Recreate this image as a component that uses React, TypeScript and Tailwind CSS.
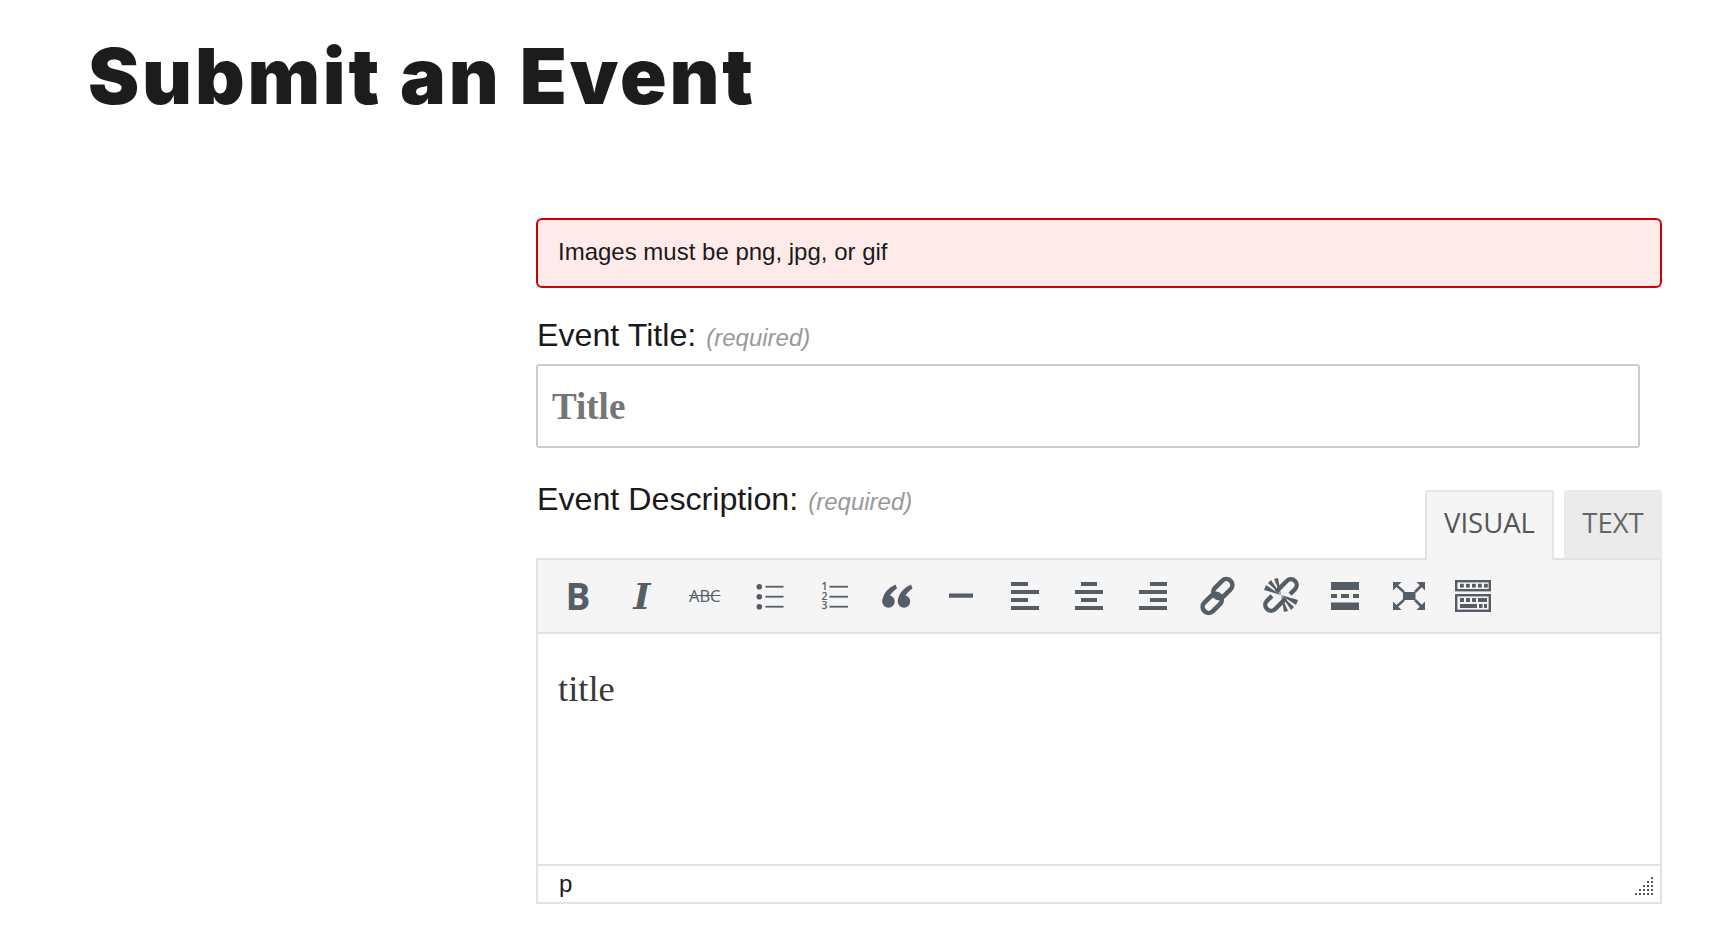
import React from "react";

const C = "#555d66";

function Svg({ children, w = 28, h = 28 }: { children: React.ReactNode; w?: number; h?: number }) {
  return (
    <svg width={w} height={h} viewBox={`0 0 ${w} ${h}`} fill={C} className="block overflow-visible">
      {children}
    </svg>
  );
}

const Bars = ({ x }: { x: number[] }) => (
  <Svg>
    <rect x={x[0]} y="0" width={x[1]} height="4" />
    <rect x="0" y="8" width="28" height="4" />
    <rect x={x[0]} y="16" width={x[1]} height="4" />
    <rect x="0" y="24" width="28" height="4" />
  </Svg>
);

const icons: React.ReactNode[] = [
  <span className="font-['Open_Sans',sans-serif] font-bold text-[37px] leading-[28px] text-[#555d66]">B</span>,
  <span className="font-['DejaVu_Serif',serif] font-bold italic text-[36px] leading-[28px] text-[#555d66]">I</span>,
  <span className="pr-[2px] font-['Open_Sans',sans-serif] text-[16.5px] leading-[28px] line-through text-[#555d66]">ABC</span>,
  <Svg>
    <circle cx="3.3" cy="4.7" r="2.8" />
    <circle cx="3.3" cy="14.7" r="2.8" />
    <circle cx="3.3" cy="24.7" r="2.8" />
    <rect x="9.5" y="3.8" width="18" height="1.8" />
    <rect x="9.5" y="13.8" width="18" height="1.8" />
    <rect x="9.5" y="23.8" width="18" height="1.8" />
  </Svg>,
  <Svg>
    <g fontFamily="'Open Sans',sans-serif" fontSize="10.5" fontWeight="600" textAnchor="middle">
      <text x="4.5" y="8">1</text>
      <text x="4.5" y="17.5">2</text>
      <text x="4.5" y="27">3</text>
    </g>
    <rect x="9.5" y="3.8" width="18.5" height="1.8" />
    <rect x="9.5" y="13.8" width="18.5" height="1.8" />
    <rect x="9.5" y="23.8" width="18.5" height="1.8" />
  </Svg>,
  <Svg>
    <g transform="translate(-1,0)">
      <circle cx="6.5" cy="19.5" r="6.2" />
      <path d="M13.5 2.5 C6 6 0.5 12 0.3 20 L6 20 C6.5 14 10 10 15 6.5Z" />
      <circle cx="22" cy="19.5" r="6.2" />
      <path d="M29 2.5 C21.5 6 16 12 15.8 20 L21.5 20 C22 14 25.5 10 30.5 6.5Z" />
    </g>
  </Svg>,
  <Svg>
    <rect x="2" y="11.5" width="24" height="4.2" />
  </Svg>,
  <Bars x={[0, 17]} />,
  <Bars x={[6, 16]} />,
  <Bars x={[11, 17]} />,
  <Svg>
    <g fill="none" stroke={C} strokeWidth="4.6" transform="translate(14.5,14) rotate(-45)">
      <rect x="-20" y="-4.5" width="22" height="12" rx="6" />
      <rect x="-2" y="-7.5" width="22" height="12" rx="6" />
    </g>
  </Svg>,
  <Svg>
    <g fill="none" stroke={C} strokeWidth="4.4" transform="translate(14,13) rotate(-45)">
      <path d="M-1 -5.8 H14 A5.8 5.8 0 0 1 14 5.8 H7" />
      <path d="M1 5.8 H-14 A5.8 5.8 0 0 1 -14 -5.8 H-7" />
    </g>
    <g transform="translate(14,13)">
      <path d="M0 0 L-17 -5 L-15 -10Z" />
      <path d="M0 0 L-13 -12 L-10 -15Z" />
      <path d="M0 0 L-7 -16 L-3 -17Z" />
      <path d="M0 0 L17 5 L15 10Z" />
      <path d="M0 0 L13 12 L10 15Z" />
      <path d="M0 0 L7 16 L3 17Z" />
    </g>
  </Svg>,
  <Svg>
    <rect x="0" y="0" width="28" height="8" />
    <rect x="0" y="12" width="6" height="4" />
    <rect x="10" y="12" width="8" height="4" />
    <rect x="22" y="12" width="6" height="4" />
    <rect x="0" y="20.5" width="28" height="7.5" />
  </Svg>,
  <Svg w={32}>
    <rect x="10" y="10" width="12.5" height="8" />
    <g stroke={C} strokeWidth="2.6">
      <line x1="3" y1="3" x2="11" y2="10" />
      <line x1="29" y1="3" x2="22" y2="10" />
      <line x1="3" y1="25" x2="11" y2="18" />
      <line x1="29" y1="25" x2="22" y2="18" />
    </g>
    <path d="M0 0 H8.5 L0 8.5Z" />
    <path d="M32 0 H23.5 L32 8.5Z" />
    <path d="M0 28 H8.5 L0 19.5Z" />
    <path d="M32 28 H23.5 L32 19.5Z" />
  </Svg>,
  <div className="pl-[1px]">
    <Svg w={36} h={32}>
      <g fill="none" stroke={C} strokeWidth="2.4">
        <rect x="1.2" y="1.2" width="33.6" height="9" />
        <rect x="1.2" y="15.2" width="33.6" height="15.6" />
      </g>
      {[5, 11, 17, 23, 29].map((x) => (
        <rect key={x} x={x} y="3.8" width="3.8" height="3.8" />
      ))}
      <rect x="5" y="18" width="4" height="4" />
      <rect x="11" y="18" width="4" height="4" />
      <rect x="17" y="18" width="4" height="4" />
      <rect x="23" y="18" width="9" height="4" />
      <rect x="5" y="24" width="17" height="4" />
      <rect x="24" y="24" width="3.5" height="4" />
      <rect x="29" y="24" width="3" height="4" />
    </Svg>
  </div>,
];

const dots: [number, number][] = [];
for (let r = 0; r < 5; r++) {
  for (let c = 4 - r; c < 5; c++) dots.push([c * 4, r * 4]);
}

function Label({ text }: { text: string }) {
  return (
    <div className="flex items-baseline gap-[10px] pl-[1px] font-['Liberation_Sans',sans-serif]">
      <span className="text-[32.2px] leading-[40px] text-[#1a1a1a]">{text}</span>
      <span className="text-[24px] leading-[40px] italic text-[#999999]">(required)</span>
    </div>
  );
}

export default function App() {
  return (
    <div className="w-[1718px] h-[940px] bg-white overflow-hidden font-['Liberation_Sans',sans-serif]">
      <h1 className="pl-[88px] pt-[24px] h-[218px] font-['Inter',sans-serif] font-black text-[77px] tracking-[2.8px] leading-[104px] text-[#1c1c1c]">
        Submit an Event
      </h1>
      <div className="ml-[536px] w-[1126px] flex flex-col">
        <div className="h-[70px] border-2 border-[#cc0000] rounded-md bg-[#ffeaea] pl-[20px] pb-[2px] flex items-center text-[24px] text-[#1a1a1a]">
          Images must be png, jpg, or gif
        </div>
        <div className="mt-[28px] mb-[8px] h-[40px] flex items-center">
          <Label text="Event Title:" />
        </div>
        <input
          placeholder="Title"
          className="w-[1104px] h-[84px] border-2 border-[#cccccc] rounded-[3px] px-[14px] font-['Liberation_Serif',serif] font-bold text-[37px] text-[#757575] placeholder:text-[#757575] bg-white outline-none"
        />
        <div className="mt-[42px] h-[68px] flex justify-between">
          <div className="-mt-[11px]">
            <Label text="Event Description:" />
          </div>
          <div className="flex gap-[10px] items-end">
            <div className="relative z-10 -mb-[2px] w-[129px] h-[70px] border-2 border-b-0 border-[#e5e5e5] rounded-t-[3px] bg-[#f5f5f5] pb-[6px] flex items-center justify-center font-['Open_Sans',sans-serif] text-[27.5px] text-[#555555]">
              VISUAL
            </div>
            <div className="w-[98px] h-[68px] border-2 border-b-0 border-[#e9e9e9] rounded-t-[3px] bg-[#ebebeb] pb-[4px] flex items-center justify-center font-['Open_Sans',sans-serif] text-[27.5px] text-[#666666]">
              TEXT
            </div>
          </div>
        </div>
        <div className="h-[346px] border-2 border-[#e2e2e2] flex flex-col">
          <div className="h-[74px] bg-[#f5f5f5] border-b-2 border-[#e2e2e2] pl-[8px] flex items-center">
            {icons.map((ic, i) => (
              <div key={i} className="w-[63.9px] h-[28px] flex items-center justify-center">
                {ic}
              </div>
            ))}
          </div>
          <div className="flex-1 px-[20px] pt-[33px] font-['Liberation_Serif',serif] text-[36.5px] leading-[44px] text-[#3a3a3a]">
            title
          </div>
          <div className="h-[38px] border-t-2 border-[#e2e2e2] pl-[21px] pr-[5px] flex items-center justify-between text-[24px] text-[#1a1a1a]">
            <span>p</span>
            <svg width="20" height="20" className="block translate-y-[3px]" fill="#555555">
              {dots.map(([x, y]) => (
                <rect key={`${x}-${y}`} x={x} y={y} width="2" height="2" />
              ))}
            </svg>
          </div>
        </div>
      </div>
    </div>
  );
}
